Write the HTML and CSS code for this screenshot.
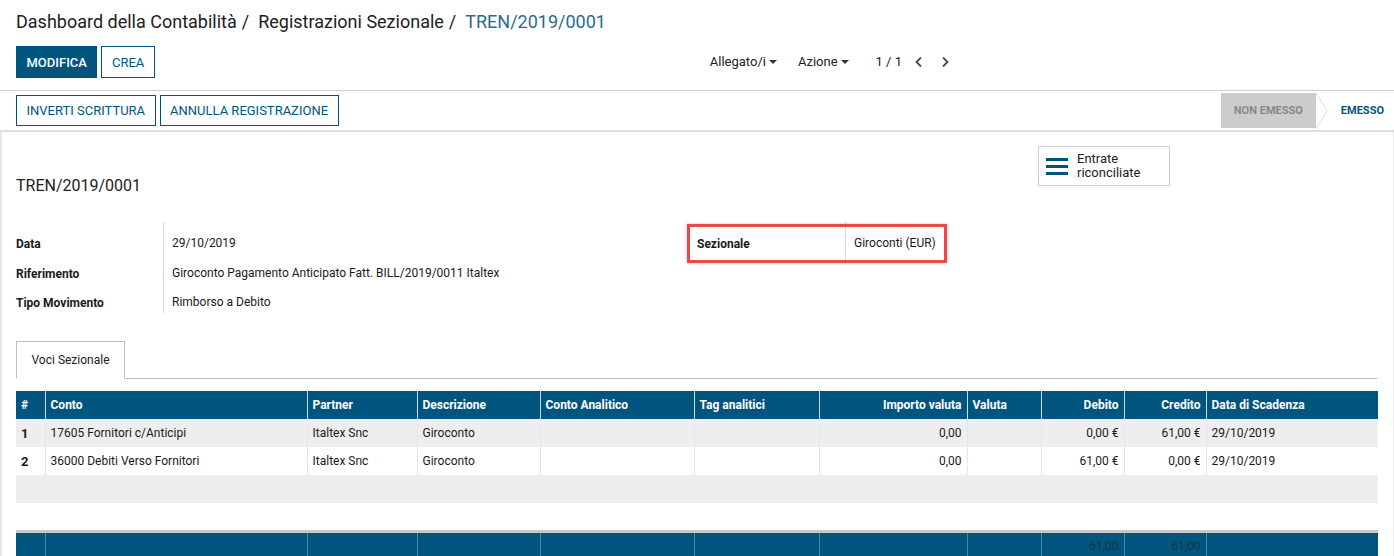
FILE: index.html
```html
<!DOCTYPE html>
<html lang="it">
<head>
<meta charset="utf-8">
<title>TREN/2019/0001</title>
<link rel="stylesheet" href="styles.css">
</head>
<body>
<div class="control-panel">
  <ol class="breadcrumb">
    <li>Dashboard della Contabilità</li>
    <li class="sep">/</li>
    <li>Registrazioni Sezionale</li>
    <li class="sep">/</li>
    <li class="active">TREN/2019/0001</li>
  </ol>
  <div class="cp-row">
    <div class="cp-buttons">
      <button class="btn btn-primary">MODIFICA</button>
      <button class="btn btn-secondary">CREA</button>
    </div>
    <div class="cp-sidebar">
      <span class="dropdown">Allegato/i <span class="caret"></span></span>
      <span class="dropdown">Azione <span class="caret"></span></span>
      <span class="pager">1 / 1</span>
      <span class="pager-arrows">
        <svg width="10" height="12" viewBox="0 0 10 12"><path d="M7 1.5 L2.5 6 L7 10.5" fill="none" stroke="#4a4a4a" stroke-width="1.8"/></svg>
        <svg width="10" height="12" viewBox="0 0 10 12"><path d="M3 1.5 L7.5 6 L3 10.5" fill="none" stroke="#4a4a4a" stroke-width="1.8"/></svg>
      </span>
    </div>
  </div>
</div>
<header class="statusbar">
  <div class="sb-buttons">
    <button class="btn btn-secondary">INVERTI SCRITTURA</button>
    <button class="btn btn-secondary">ANNULLA REGISTRAZIONE</button>
  </div>
  <div class="sb-status">
    <span class="st st-inactive">NON EMESSO</span>
    <span class="st-arrow"><svg width="12" height="36" viewBox="0 0 12 36"><path d="M0 0 L11 18 L0 36" fill="none" stroke="#dcdcdc" stroke-width="1"/></svg></span>
    <span class="st st-active">EMESSO</span>
  </div>
</header>
<main class="sheet">
  <div class="title-row">
    <h1 class="rec-name">TREN/2019/0001</h1>
    <button class="stat-btn">
      <span class="stat-icon"><i></i><i></i><i></i></span>
      <span class="stat-text">Entrate<br>riconciliate</span>
    </button>
  </div>
  <div class="groups">
    <div class="group group-left">
      <div class="g-labels">
        <div class="lbl">Data</div>
        <div class="lbl">Riferimento</div>
        <div class="lbl">Tipo Movimento</div>
      </div>
      <div class="g-values">
        <div class="val">29/10/2019</div>
        <div class="val">Giroconto Pagamento Anticipato Fatt. BILL/2019/0011 Italtex</div>
        <div class="val">Rimborso a Debito</div>
      </div>
    </div>
    <div class="group group-right">
      <div class="g-labels g-labels-r">
        <div class="lbl">Sezionale</div>
      </div>
      <div class="g-values g-values-r">
        <div class="val">Giroconti (EUR)</div>
      </div>
      <div class="highlight"></div>
    </div>
  </div>
  <div class="tabs">
    <div class="tab">Voci Sezionale</div>
  </div>
  <div class="table-wrap">
    <table class="lines">
      <colgroup>
        <col style="width:29px"><col style="width:262px"><col style="width:110px"><col style="width:123px"><col style="width:154px"><col style="width:125px"><col style="width:148px"><col style="width:74px"><col style="width:83px"><col style="width:82px"><col style="width:172px">
      </colgroup>
      <thead>
        <tr>
          <th>#</th><th>Conto</th><th>Partner</th><th>Descrizione</th><th>Conto Analitico</th><th>Tag analitici</th><th class="r">Importo valuta</th><th>Valuta</th><th class="r">Debito</th><th class="r">Credito</th><th>Data di Scadenza</th>
        </tr>
      </thead>
      <tbody>
        <tr>
          <td class="b">1</td><td>17605 Fornitori c/Anticipi</td><td>Italtex Snc</td><td>Giroconto</td><td></td><td></td><td class="r">0,00</td><td></td><td class="r">0,00 €</td><td class="r">61,00 €</td><td>29/10/2019</td>
        </tr>
        <tr>
          <td class="b">2</td><td>36000 Debiti Verso Fornitori</td><td>Italtex Snc</td><td>Giroconto</td><td></td><td></td><td class="r">0,00</td><td></td><td class="r">61,00 €</td><td class="r">0,00 €</td><td>29/10/2019</td>
        </tr>
        <tr class="empty"><td colspan="11"></td></tr>
        <tr class="empty"><td colspan="11"></td></tr>
      </tbody>
      <tfoot>
        <tr>
          <td></td><td></td><td></td><td></td><td></td><td></td><td></td><td></td><td class="r">61,00</td><td class="r">61,00</td><td></td>
        </tr>
      </tfoot>
    </table>
  </div>
</main>
</body>
</html>
```

FILE: styles.css
```css
* { box-sizing: border-box; }
html, body { margin: 0; padding: 0; background: #fff; }
body {
  font-family: Roboto, "Liberation Sans", sans-serif;
  font-size: 12px;
  color: #212121;
  width: 1394px;
  height: 556px;
  overflow: hidden;
}
button { font-family: inherit; cursor: pointer; }

.control-panel {
  padding: 0 16px;
  border-bottom: 1px solid #cfcfcf;
  height: 91px;
}
.breadcrumb {
  list-style: none;
  margin: 0;
  padding: 11px 0 0;
  display: flex;
  font-size: 18px;
  color: #212121;
  height: 46px;
  line-height: 22px;
}
.breadcrumb .sep { margin: 0 9px 0 5px; }
.breadcrumb .active { color: #2b6a90; }

.cp-row { display: flex; align-items: center; }
.cp-buttons { display: flex; gap: 4px; }
.btn {
  height: 32px;
  padding: 0 9.5px;
  font-size: 13px;
  border-radius: 0;
  border: 1px solid #00557f;
  letter-spacing: 0;
}
.btn-primary { background: #00557f; color: #fff; font-weight: 500; }
.btn-secondary { background: #fff; color: #00557f; font-weight: 400; }

.cp-sidebar {
  margin-left: 555px;
  display: flex;
  align-items: center;
  font-size: 13px;
  color: #222;
  padding-bottom: 1px;
}
.dropdown { margin-right: 21px; display: flex; align-items: center; }
.caret {
  display: inline-block;
  width: 0; height: 0;
  margin-left: 3px;
  border-left: 4px solid transparent;
  border-right: 4px solid transparent;
  border-top: 4px solid #333;
}
.pager { margin-left: 6px; margin-right: 12px; }
.pager-arrows { display: flex; gap: 16px; align-items: center; }

.statusbar {
  height: 41px;
  border-bottom: 2px solid #dedede;
  display: flex;
  justify-content: space-between;
  align-items: center;
  padding-left: 16px;
}
.sb-buttons { display: flex; gap: 4px; }
.statusbar .btn { height: 31px; padding: 0 9.5px; }
.sb-status { display: flex; align-items: center; height: 100%; padding-right: 10px; }
.st { font-size: 11px; font-weight: 700; }
.st-inactive {
  background: #cccccc;
  color: #888;
  height: 35px;
  width: 95px;
  display: flex;
  align-items: center;
  justify-content: center;
}
.st-arrow { display: flex; align-items: center; height: 36px; margin-right: 13px; }
.st-active { color: #00557f; }

.sheet {
  border-left: 2px solid #e6e6e6;
  border-right: 1px solid #e6e6e6;
  padding: 14px 16px 0 14px;
  height: 425px;
}
.title-row {
  display: flex;
  justify-content: space-between;
  align-items: flex-start;
  height: 76px;
}
.rec-name {
  margin: 30px 0 0;
  font-size: 16px;
  font-weight: 400;
  color: #212121;
}
.stat-btn {
  margin-right: 207px;
  width: 132px;
  height: 40px;
  border: 1px solid #cfcfcf;
  background: #fff;
  display: flex;
  align-items: center;
  padding: 0 0 0 7px;
  text-align: left;
}
.stat-icon { display: flex; flex-direction: column; gap: 4px; width: 22px; margin-right: 9px; }
.stat-icon i { display: block; height: 3px; background: #00557f; }
.stat-text { font-size: 13px; line-height: 14px; color: #222; }

.groups { display: flex; height: 118px; }
.group { display: flex; position: relative; }
.group-left { width: 671px; }
.g-labels {
  width: 148px;
  border-right: 1px solid #dcdcdc;
  padding-top: 14px;
  height: 91px;
}
.g-values { padding-left: 8px; padding-top: 13px; }
.lbl { font-weight: 700; height: 29.5px; line-height: 16px; color: #1a1a1a; }
.val { height: 29.5px; line-height: 16px; color: #1a1a1a; }
.g-labels-r { width: 159px; height: 42px; padding-left: 10px; }
.g-values-r { padding-left: 8px; }
.highlight {
  position: absolute;
  left: 0; top: 2px;
  width: 260px; height: 39px;
  border: 3px solid #ef4646;
  box-shadow: 0 0 3px rgba(0,0,0,0.25);
  pointer-events: none;
}

.tabs {
  display: flex;
  border-bottom: 1px solid #bdbdbd;
  margin-top: 1px;
  height: 38px;
}
.tab {
  width: 109px;
  height: 38px;
  border: 1px solid #bdbdbd;
  border-bottom: 1px solid #fff;
  margin-bottom: -1px;
  display: flex;
  align-items: center;
  justify-content: center;
  background: #fff;
  color: #222;
}

.table-wrap { margin-top: 12px; border-right: 1px solid #e4e4e4; }
.lines {
  width: 1362px;
  border-collapse: collapse;
  table-layout: fixed;
}
.lines th {
  background: #00557f;
  color: #fff;
  font-weight: 700;
  text-align: left;
  height: 28px;
  padding: 0 5px;
  border-left: 1px solid #cfdde6;
  white-space: nowrap;
}
.lines th:first-child { border-left: none; }
.lines td {
  height: 28px;
  padding: 0 5px;
  border-left: 1px solid #e5e5e5;
  white-space: nowrap;
  color: #1a1a1a;
}
.lines td:first-child { border-left: none; }
.lines .r { text-align: right; }
.lines td.b { font-weight: 700; font-size: 13px; }
.lines tbody tr:nth-child(odd) td { background: #eeeeee; }
.lines tbody tr:nth-child(even) td { background: #fff; }
.lines tr.empty td { border-left: none; }
.lines tfoot td {
  background: #00557f;
  border-top: 3px solid #c8c8c8;
  border-left: 1px solid #4d86a4;
  color: #17354a;
  height: 28px;
}
.lines tfoot td:first-child { border-left: none; }
```
